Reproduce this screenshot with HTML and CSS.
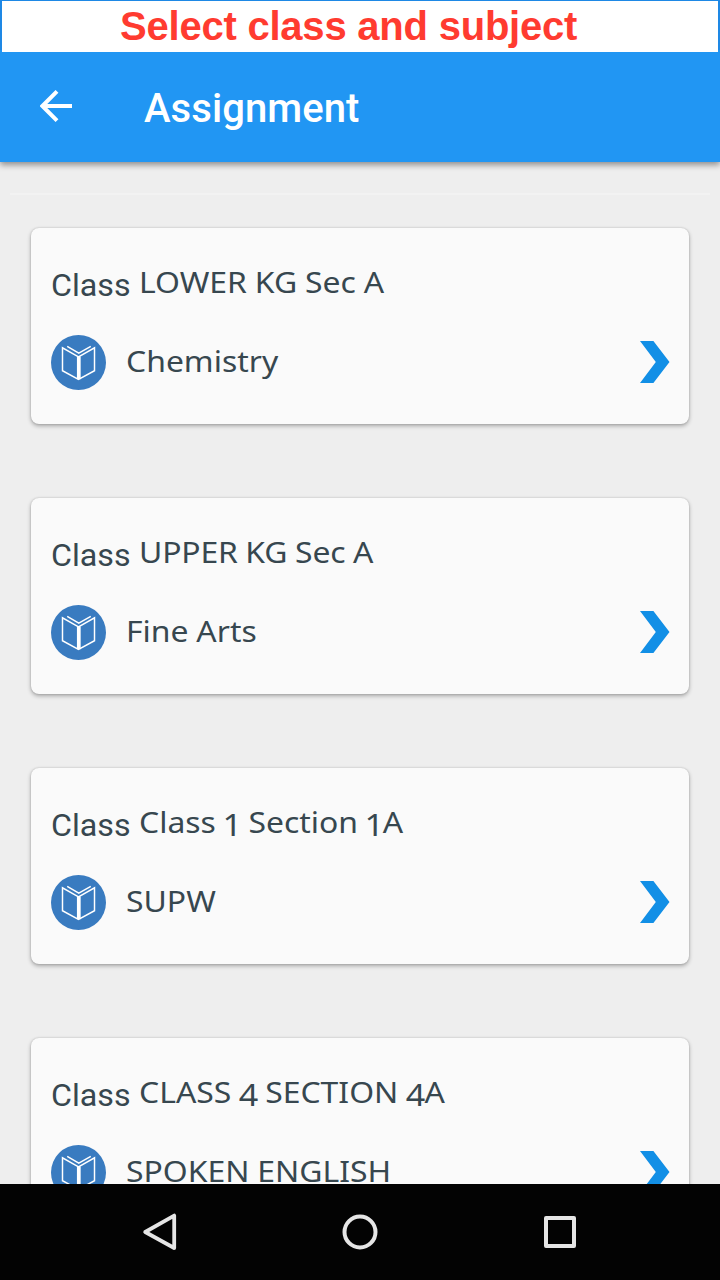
FILE: index.html
```
<!DOCTYPE html>
<html lang="en">
<head>
<meta charset="utf-8">
<title>Assignment</title>
<link rel="stylesheet" href="styles.css">
</head>
<body>
<svg class="defs" aria-hidden="true">
  <symbol id="book" viewBox="0 0 56 56">
    <circle cx="28" cy="28" r="28" fill="#397bc0"/>
    <g fill="none" stroke="#fff" stroke-width="1.5">
      <path d="M28 22.2 11.7 13v23.4L28 45.1l16.3-8.7V13z"/>
      <path d="m16.5 11.6 11.8 6.8 12.2-6.8"/>
      <path d="M28.3 22v23" stroke-width="3.8"/>
    </g>
  </symbol>
  <symbol id="chevron" viewBox="0 0 30 42">
    <path d="M0 0h13.4L29.5 21 13.4 42H0l15.8-21z" fill="#128fe6"/>
  </symbol>
</svg>
<div class="screen">
  <div class="banner"><h1 class="banner-text">Select class and subject</h1></div>
  <header class="toolbar">
    <svg class="back" viewBox="0 0 32 32"><path d="M32 16H3M17 1.4 2.4 16 17 30.6" fill="none" stroke="#fff" stroke-width="4"/></svg>
    <h2 class="title">Assignment</h2>
  </header>
  <main class="list">
    <div class="divider"></div>
    <section class="card">
      <div class="class-row"><span class="label">Class</span><span class="name">LOWER KG Sec A</span></div>
      <div class="subject-row"><svg class="book"><use href="#book"/></svg><span class="name">Chemistry</span><svg class="chevron"><use href="#chevron"/></svg></div>
    </section>
    <section class="card">
      <div class="class-row"><span class="label">Class</span><span class="name upper">UPPER KG Sec A</span></div>
      <div class="subject-row"><svg class="book"><use href="#book"/></svg><span class="name">Fine Arts</span><svg class="chevron"><use href="#chevron"/></svg></div>
    </section>
    <section class="card">
      <div class="class-row"><span class="label">Class</span><span class="name">Class <span class="digit one">1</span> Section <span class="digit one">1</span>A</span></div>
      <div class="subject-row"><svg class="book"><use href="#book"/></svg><span class="name">SUPW</span><svg class="chevron"><use href="#chevron"/></svg></div>
    </section>
    <section class="card">
      <div class="class-row"><span class="label">Class</span><span class="name">CLASS <span class="digit">4</span> SECTION <span class="digit">4</span>A</span></div>
      <div class="subject-row"><svg class="book"><use href="#book"/></svg><span class="name">SPOKEN ENGLISH</span><svg class="chevron"><use href="#chevron"/></svg></div>
    </section>
  </main>
  <nav class="navbar">
    <svg class="nav-icon" viewBox="0 0 40 40"><path d="M34.2 3.6v32.4L5.2 20z" fill="none" stroke="#e6e6e6" stroke-width="3.8" stroke-linejoin="round"/></svg>
    <svg class="nav-icon" viewBox="0 0 40 40"><circle cx="20" cy="20" r="15.5" fill="none" stroke="#e6e6e6" stroke-width="4"/></svg>
    <svg class="nav-icon" viewBox="0 0 40 40"><rect x="6" y="6" width="28" height="28" fill="none" stroke="#e6e6e6" stroke-width="4" stroke-linejoin="round"/></svg>
  </nav>
</div>
</body>
</html>
```
FILE: styles.css
```
* { box-sizing: border-box; }
body { margin: 0; }
.defs { display: none; }
.screen {
  width: 720px;
  height: 1280px;
  display: flex;
  flex-direction: column;
  overflow: hidden;
  background: #eee;
  font-family: Roboto, sans-serif;
}
.banner {
  flex: none;
  height: 52px;
  padding: 1px 2px 0;
  background: linear-gradient(#1e88e5 50px, #2196f3 50px);
  position: relative;
  z-index: 2;
}
.banner-text {
  height: 51px;
  margin: 0;
  padding-left: 118px;
  background: #fff;
  color: #ff3b30;
  font: bold 40px/50px "Liberation Sans", sans-serif;
  letter-spacing: -.22px;
  white-space: nowrap;
}
.toolbar {
  flex: none;
  height: 110px;
  display: flex;
  align-items: center;
  padding: 0 40px;
  gap: 72px;
  background: #2196f3;
  box-shadow: 0 3px 6px rgba(0, 0, 0, .4);
  position: relative;
}
.back { width: 32px; height: 32px; margin-bottom: 2px; }
.title { margin: 4px 0 0; color: #fff; font-size: 40px; line-height: 48px; font-weight: 500; letter-spacing: .08px; }
.list { flex: 1; min-height: 0; overflow: hidden; padding: 31px 31px 0; }
.divider { height: 2px; margin: 0 -21px 33px; background: #f2f2f2; }
.card {
  height: 196px;
  margin-bottom: 74px;
  padding: 35px 20px 0;
  border-radius: 8px;
  background: #fafafa;
  box-shadow: 0 2px 4px rgba(0, 0, 0, .3), 0 0 2px rgba(0, 0, 0, .18);
  color: #37474f;
}
.class-row { display: flex; gap: 9px; height: 44px; }
.label { width: 79px; font-size: 32.2px; line-height: 45px; }
.name {
  font-family: "Noto Sans", sans-serif;
  font-size: 29px;
  line-height: 37px;
  white-space: pre;
  word-spacing: -.4px;
  transform-origin: left;
  transform: scaleX(1.1);
}
.upper { letter-spacing: -.15px; }
.digit { display: inline-block; font-size: 31px; line-height: 30px; margin: 0 -.8px 0 -.4px; transform: translateY(3px); }
.one { margin: 0 -1.2px; }
.subject-row { display: flex; align-items: center; height: 55px; margin-top: 28px; }
.book { width: 55px; height: 55px; flex: none; margin: 0 20px 0 0; }
.subject-row .name { margin-bottom: 4px; }
.chevron { width: 30px; height: 42px; margin: 0 -.5px 2px auto; }
.navbar {
  flex: none;
  height: 96px;
  display: flex;
  justify-content: center;
  align-items: center;
  gap: 160px;
  background: #030303;
  position: relative;
}
.nav-icon { width: 40px; height: 40px; }
```
